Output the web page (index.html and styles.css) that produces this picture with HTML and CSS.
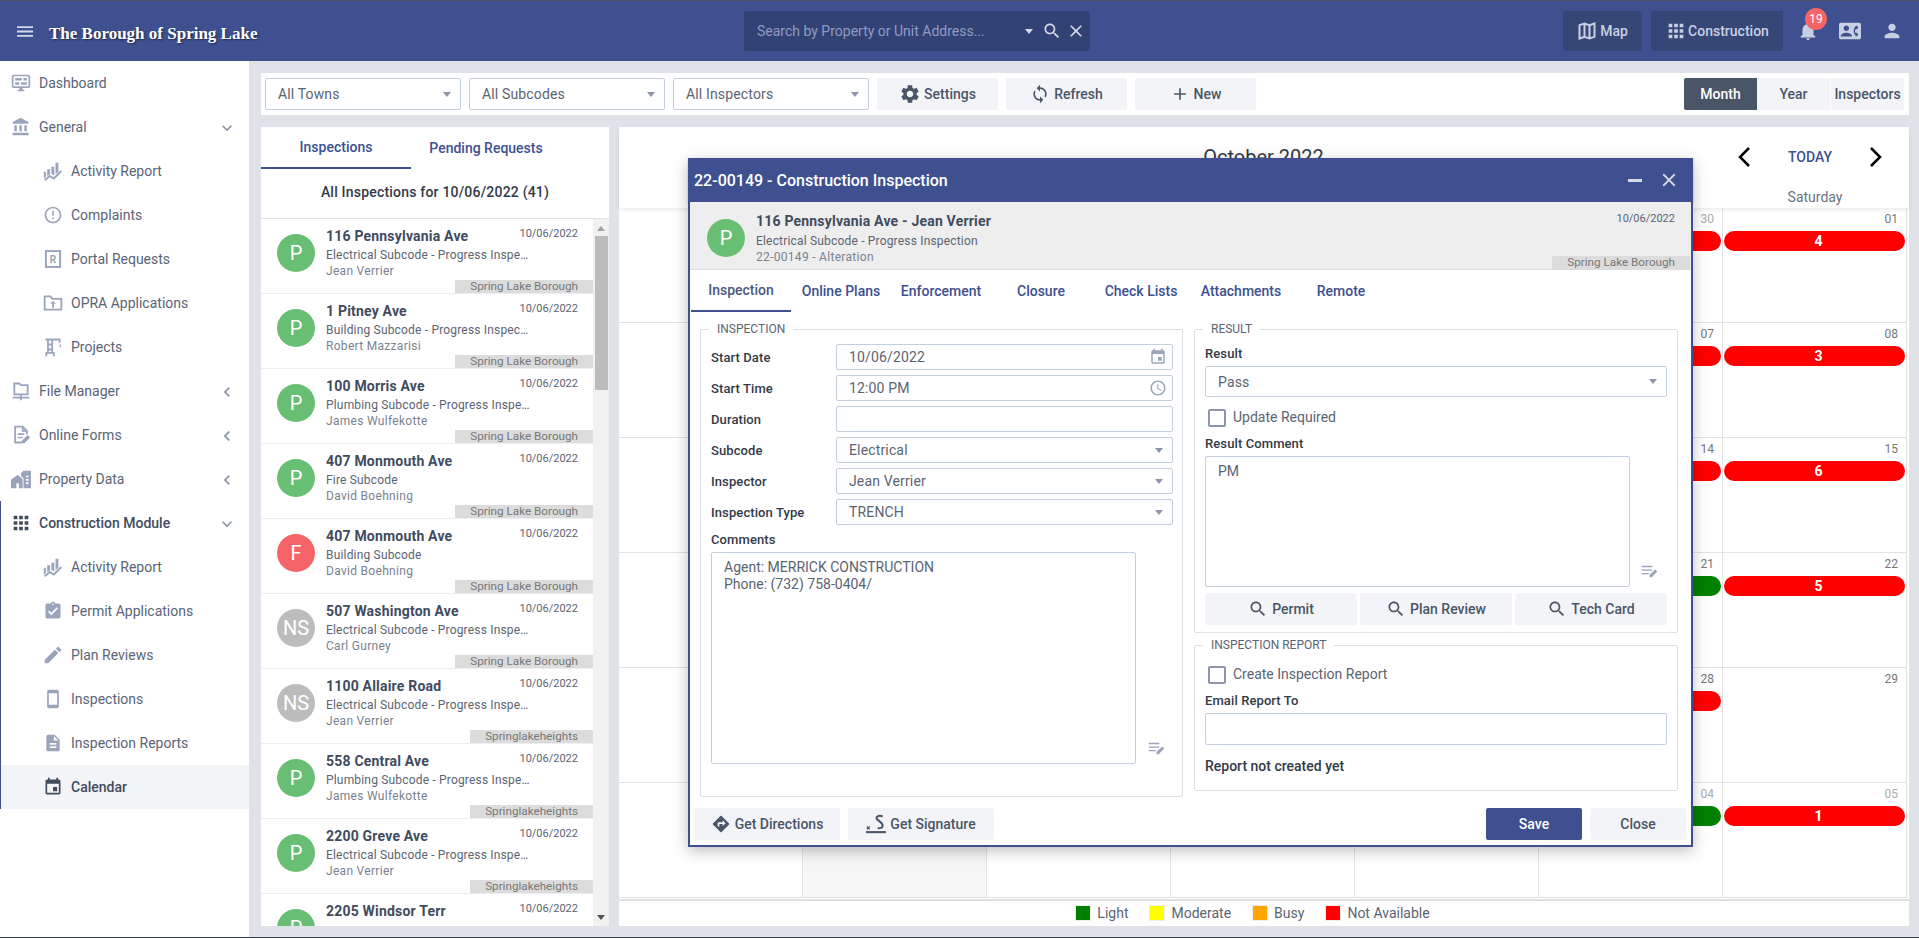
FILE: index.html
```html
<!DOCTYPE html>
<html lang="en">
<head>
<meta charset="utf-8">
<title>The Borough of Spring Lake</title>
<link rel="stylesheet" href="styles.css">
</head>
<body>
<svg class="sprite" xmlns="http://www.w3.org/2000/svg">
  <symbol id="i-menu" viewBox="3 6 18 12"><path d="M3 18h18v-2H3v2zm0-5h18v-2H3v2zm0-7v2h18V6H3z"/></symbol>
  <symbol id="i-search" viewBox="0 0 24 24"><path d="M15.5 14h-.79l-.28-.27C15.41 12.59 16 11.11 16 9.5 16 5.91 13.09 3 9.5 3S3 5.91 3 9.5 5.91 16 9.5 16c1.61 0 3.09-.59 4.23-1.57l.27.28v.79l5 4.99L20.49 19l-4.99-5zm-6 0C7.01 14 5 11.99 5 9.5S7.01 5 9.5 5 14 7.01 14 9.5 11.99 14 9.5 14z"/></symbol>
  <symbol id="i-close" viewBox="0 0 24 24"><path d="M19 6.41L17.59 5 12 10.59 6.41 5 5 6.41 10.59 12 5 17.59 6.41 19 12 13.41 17.59 19 19 17.59 13.41 12z"/></symbol>
  <symbol id="i-map" viewBox="0 0 24 24"><path fill="none" stroke="currentColor" stroke-width="2.4" d="M3 5l6-2 6 2 6-2v16l-6 2-6-2-6 2zM9 3v16M15 5v16"/></symbol>
  <symbol id="i-apps" viewBox="0 0 24 24"><path d="M4 8h4V4H4v4zm6 12h4v-4h-4v4zm-6 0h4v-4H4v4zm0-6h4v-4H4v4zm6 0h4v-4h-4v4zm6-10v4h4V4h-4zm-6 4h4V4h-4v4zm6 6h4v-4h-4v4zm0 6h4v-4h-4v4z"/></symbol>
  <symbol id="i-bell" viewBox="0 0 24 24"><path d="M12 22c1.1 0 2-.9 2-2h-4c0 1.1.89 2 2 2zm6-6v-5c0-3.07-1.64-5.64-4.5-6.32V4c0-.83-.67-1.5-1.5-1.5s-1.5.67-1.5 1.5v.68C7.63 5.36 6 7.92 6 11v5l-2 2v1h16v-1l-2-2z"/></symbol>
  <symbol id="i-person" viewBox="0 0 24 24"><path d="M12 12c2.21 0 4-1.79 4-4s-1.79-4-4-4-4 1.79-4 4 1.79 4 4 4zm0 2c-2.67 0-8 1.34-8 4v2h16v-2c0-2.66-5.33-4-8-4z"/></symbol>
  <symbol id="i-contact" viewBox="0 0 24 24"><path d="M22 3H2C.9 3 0 3.9 0 5v14c0 1.1.9 2 2 2h20c1.1 0 1.99-.9 1.99-2L24 5c0-1.1-.9-2-2-2zM8 6c1.66 0 3 1.34 3 3s-1.34 3-3 3-3-1.34-3-3 1.34-3 3-3zm6 12H2v-1c0-2 4-3.1 6-3.1s6 1.1 6 3.1v1zm3.85-4h1.64L21 16l-1.99 1.99c-1.31-.98-2.28-2.38-2.73-3.99-.18-.64-.28-1.31-.28-2s.1-1.36.28-2c.45-1.62 1.42-3.01 2.73-3.99L21 8l-1.51 2h-1.64c-.22.63-.35 1.3-.35 2s.13 1.37.35 2z"/></symbol>
  <symbol id="i-gear" viewBox="0 0 24 24"><path d="M19.14 12.94c.04-.3.06-.61.06-.94 0-.32-.02-.64-.07-.94l2.03-1.58c.18-.14.23-.41.12-.61l-1.92-3.32c-.12-.22-.37-.29-.59-.22l-2.39.96c-.5-.38-1.03-.7-1.62-.94l-.36-2.54c-.04-.24-.24-.41-.48-.41h-3.84c-.24 0-.43.17-.47.41l-.36 2.54c-.59.24-1.13.57-1.62.94l-2.39-.96c-.22-.08-.47 0-.59.22L2.74 8.87c-.12.21-.08.47.12.61l2.03 1.58c-.05.3-.09.63-.09.94s.02.64.07.94l-2.03 1.58c-.18.14-.23.41-.12.61l1.92 3.32c.12.22.37.29.59.22l2.39-.96c.5.38 1.03.7 1.62.94l.36 2.54c.05.24.24.41.48.41h3.84c.24 0 .44-.17.47-.41l.36-2.54c.59-.24 1.13-.56 1.62-.94l2.39.96c.22.08.47 0 .59-.22l1.92-3.32c.12-.22.07-.47-.12-.61l-2.01-1.58zM12 15.6c-1.98 0-3.6-1.62-3.6-3.6s1.62-3.6 3.6-3.6 3.6 1.62 3.6 3.6-1.62 3.6-3.6 3.6z"/></symbol>
  <symbol id="i-sync" viewBox="0 0 24 24"><path d="M12 4V1L8 5l4 4V6c3.31 0 6 2.69 6 6 0 1.01-.25 1.97-.7 2.8l1.46 1.46C19.54 15.03 20 13.57 20 12c0-4.42-3.58-8-8-8zm0 14c-3.31 0-6-2.69-6-6 0-1.01.25-1.97.7-2.8L5.24 7.74C4.46 8.97 4 10.43 4 12c0 4.42 3.58 8 8 8v3l4-4-4-4v3z"/></symbol>
  <symbol id="i-add" viewBox="0 0 24 24"><path d="M19 13h-6v6h-2v-6H5v-2h6V5h2v6h6v2z"/></symbol>
  <symbol id="i-event" viewBox="0 0 24 24"><path d="M17 12h-5v5h5v-5zM16 1v2H8V1H6v2H5c-1.11 0-1.99.9-1.99 2L3 19c0 1.1.89 2 2 2h14c1.1 0 2-.9 2-2V5c0-1.1-.9-2-2-2h-1V1h-2zm3 18H5V8h14v11z"/></symbol>
  <symbol id="i-clock" viewBox="0 0 24 24"><path d="M11.99 2C6.47 2 2 6.48 2 12s4.47 10 9.99 10C17.52 22 22 17.52 22 12S17.52 2 11.99 2zM12 20c-4.42 0-8-3.58-8-8s3.58-8 8-8 8 3.58 8 8-3.58 8-8 8zm.5-13H11v6l5.25 3.15.75-1.23-4.5-2.67z"/></symbol>
  <symbol id="i-directions" viewBox="0 0 24 24"><path d="M21.71 11.29l-9-9c-.39-.39-1.02-.39-1.41 0l-9 9c-.39.39-.39 1.02 0 1.41l9 9c.39.39 1.02.39 1.41 0l9-9c.39-.38.39-1.01 0-1.41zM14 14.5V12h-4v3H8v-4c0-.55.45-1 1-1h5V7.5l3.5 3.5-3.5 3.5z"/></symbol>
  <symbol id="i-pencil" viewBox="0 0 24 24"><path d="M3 17.25V21h3.75L17.81 9.94l-3.75-3.75L3 17.25zM20.71 7.04c.39-.39.39-1.02 0-1.41l-2.34-2.34c-.39-.39-1.02-.39-1.41 0l-1.83 1.83 3.75 3.75 1.83-1.83z"/></symbol>
  <symbol id="i-phone" viewBox="0 0 24 24"><path d="M17 1.01L7 1c-1.1 0-2 .9-2 2v18c0 1.1.9 2 2 2h10c1.1 0 2-.9 2-2V3c0-1.1-.9-1.99-2-1.99zM17 19H7V5h10v14z"/></symbol>
  <symbol id="i-doc" viewBox="0 0 24 24"><path d="M14 2H6c-1.1 0-1.99.9-1.99 2L4 20c0 1.1.89 2 1.99 2H18c1.1 0 2-.9 2-2V8l-6-6zm2 16H8v-2h8v2zm0-4H8v-2h8v2zm-3-5V3.5L18.5 9H13z"/></symbol>
  <symbol id="i-assign" viewBox="0 0 24 24"><path d="M19 3h-4.18C14.4 1.84 13.3 1 12 1c-1.3 0-2.4.84-2.82 2H5c-1.1 0-2 .9-2 2v14c0 1.1.9 2 2 2h14c1.1 0 2-.9 2-2V5c0-1.1-.9-2-2-2zm-7 0c.55 0 1 .45 1 1s-.45 1-1 1-1-.45-1-1 .45-1 1-1zm-2 14l-4-4 1.41-1.41L10 14.17l6.59-6.59L18 9l-8 8z"/></symbol>
  <symbol id="i-alert" viewBox="0 0 24 24"><path d="M11 15h2v2h-2zm0-8h2v6h-2zm.99-5C6.47 2 2 6.48 2 12s4.47 10 9.99 10C17.52 22 22 17.52 22 12S17.52 2 11.99 2zM12 20c-4.42 0-8-3.58-8-8s3.58-8 8-8 8 3.58 8 8-3.58 8-8 8z"/></symbol>
  <symbol id="i-bank" viewBox="0 0 24 24"><path d="M4 10v7h3v-7H4zm6 0v7h3v-7h-3zM2 22h19v-3H2v3zm14-12v7h3v-7h-3zm-4.5-9L2 6v2h19V6l-9.5-5z"/></symbol>
  <symbol id="i-dash" viewBox="0 0 24 24"><path d="M21 2H3c-1.1 0-2 .9-2 2v12c0 1.1.9 2 2 2h7v2H8v2h8v-2h-2v-2h7c1.1 0 2-.9 2-2V4c0-1.1-.9-2-2-2zm0 14H3V4h18v12z"/><path d="M5 6h8v3H5zM15 6h4v3h-4zM5 11h5v3H5zM12 11h7v3h-7z"/></symbol>
  <symbol id="i-activity" viewBox="0 0 24 24"><path d="M5 10h3.500v6L5 18zM10 7h3.500v10.500L10 15.500zM15 2h3.500v11L15 16z"/><path fill="none" stroke="currentColor" stroke-width="2.400" d="M2 23l6-5 5 3 9-9"/><path d="M1 13h2.500v6L1 21z"/></symbol>
  <symbol id="i-portal" viewBox="0 0 24 24"><rect x="3.500" y="2.500" width="17" height="19" fill="none" stroke="currentColor" stroke-width="2.400"/><text x="12" y="16.500" font-family="Roboto, sans-serif" font-size="12" font-weight="700" text-anchor="middle">R</text></symbol>
  <symbol id="i-folder" viewBox="0 0 24 24"><path fill="none" stroke="currentColor" stroke-width="2.200" d="M2 4h7l2 3h11v13H2z"/><path d="M12 9.500l3.500 3.500H13v5h-2v-5H8.500z"/></symbol>
  <symbol id="i-crane" viewBox="0 0 24 24"><path fill="none" stroke="currentColor" stroke-width="2.200" d="M3 3h18M6 3v16M11 3v16M5 9h7M5 15h7M3 19h11M4 19v4M13 19v4M20 3v4"/><path fill="none" stroke="currentColor" stroke-width="1.500" d="M20 9c2 1 1 3 0 3"/></symbol>
  <symbol id="i-netfolder" viewBox="0 0 24 24"><path fill="none" stroke="currentColor" stroke-width="2.200" d="M4 3h6l2 2h8v11H4z"/><path d="M11 16h2v3h9v2h-9v2h-2v-2H2v-2h9z"/></symbol>
  <symbol id="i-form" viewBox="0 0 24 24"><path fill="none" stroke="currentColor" stroke-width="2.200" d="M13 21H5V2h9l5 5v4M14 2v5h5"/><path d="M8 10h8v2H8zM8 14h6v2H8z"/><path d="M13 22v-3l7-7 3 3-7 7z"/></symbol>
  <symbol id="i-property" viewBox="0 0 24 24"><path d="M0 23V13l8-6 6 5V23H9.500v-6h-3v6z"/><path fill-rule="evenodd" d="M15 2h9v21h-9V11l-3-2.500V5zM18 8v2h3V8zM18 12v2h3v-2zM18 16v2h3v-2z"/></symbol>
  <symbol id="i-notes" viewBox="0 0 24 18"><path d="M1 1h15v2H1zM1 6h15v2H1zM1 11h10v2H1z"/><path d="M12 17v-3l8-8 3 3-8 8z"/></symbol>
  <symbol id="i-sign" viewBox="0 0 24 24"><path fill="none" stroke="currentColor" stroke-width="2.400" d="M20 3c-5-2-8 0-7 3 1 2 7 4 7 8 0 2-2 3-6 3"/><path fill="none" stroke="currentColor" stroke-width="1.500" d="M1 15l3.500 3.500M4.500 15L1 18.500"/><path d="M0 20.500h24V23H0z"/></symbol>
  <symbol id="i-down" viewBox="0 0 24 24"><path d="M16.590 8.590L12 13.170 7.410 8.590 6 10l6 6 6-6z"/></symbol>
  <symbol id="i-left" viewBox="0 0 24 24"><path d="M15.410 7.410L14 6l-6 6 6 6 1.410-1.410L10.830 12z"/></symbol>
  <symbol id="i-prev" viewBox="0 0 12 20"><path fill="none" stroke="currentColor" stroke-width="2.500" d="M11 1L2 10l9 9"/></symbol>
  <symbol id="i-next" viewBox="0 0 12 20"><path fill="none" stroke="currentColor" stroke-width="2.500" d="M1 1l9 9-9 9"/></symbol>
</svg>

<div class="app">
  <header class="topbar">
    <div class="brand">
      <svg class="ic-menu"><use href="#i-menu"/></svg>
      <span class="brand-name">The Borough of Spring Lake</span>
    </div>
    <div class="searchbox">
      <span class="search-text">Search by Property or Unit Address...</span>
      <span class="caret caret-light"></span>
      <svg class="ic-search"><use href="#i-search"/></svg>
      <svg class="ic-search"><use href="#i-close"/></svg>
    </div>
    <div class="top-actions">
      <a class="top-btn top-btn-map"><svg class="ic-20"><use href="#i-map"/></svg>Map</a>
      <a class="top-btn top-btn-con"><svg class="ic-22"><use href="#i-apps"/></svg>Construction</a>
      <span class="top-icon"><svg class="ic-22"><use href="#i-bell"/></svg><b class="badge">19</b></span>
      <span class="top-icon"><svg class="ic-22"><use href="#i-contact"/></svg></span>
      <span class="top-icon"><svg class="ic-22"><use href="#i-person"/></svg></span>
    </div>
  </header>

  <div class="main">
    <nav class="sidebar">
      <a class="nav-row"><svg class="nav-ic"><use href="#i-dash"/></svg>Dashboard</a>
      <a class="nav-row"><svg class="nav-ic"><use href="#i-bank"/></svg>General<svg class="nav-arrow"><use href="#i-down"/></svg></a>
      <a class="nav-row nav-sub"><svg class="nav-ic"><use href="#i-activity"/></svg>Activity Report</a>
      <a class="nav-row nav-sub"><svg class="nav-ic"><use href="#i-alert"/></svg>Complaints</a>
      <a class="nav-row nav-sub"><svg class="nav-ic"><use href="#i-portal"/></svg>Portal Requests</a>
      <a class="nav-row nav-sub"><svg class="nav-ic"><use href="#i-folder"/></svg>OPRA Applications</a>
      <a class="nav-row nav-sub"><svg class="nav-ic"><use href="#i-crane"/></svg>Projects</a>
      <a class="nav-row"><svg class="nav-ic"><use href="#i-netfolder"/></svg>File Manager<svg class="nav-arrow"><use href="#i-left"/></svg></a>
      <a class="nav-row"><svg class="nav-ic"><use href="#i-form"/></svg>Online Forms<svg class="nav-arrow"><use href="#i-left"/></svg></a>
      <a class="nav-row"><svg class="nav-ic"><use href="#i-property"/></svg>Property Data<svg class="nav-arrow"><use href="#i-left"/></svg></a>
      <div class="nav-group">
        <a class="nav-row nav-open"><svg class="nav-ic nav-ic-lg"><use href="#i-apps"/></svg>Construction Module<svg class="nav-arrow"><use href="#i-down"/></svg></a>
        <a class="nav-row nav-sub"><svg class="nav-ic"><use href="#i-activity"/></svg>Activity Report</a>
        <a class="nav-row nav-sub"><svg class="nav-ic"><use href="#i-assign"/></svg>Permit Applications</a>
        <a class="nav-row nav-sub"><svg class="nav-ic nav-ic-lg"><use href="#i-pencil"/></svg>Plan Reviews</a>
        <a class="nav-row nav-sub"><svg class="nav-ic"><use href="#i-phone"/></svg>Inspections</a>
        <a class="nav-row nav-sub"><svg class="nav-ic"><use href="#i-doc"/></svg>Inspection Reports</a>
        <a class="nav-row nav-sub nav-active"><svg class="nav-ic"><use href="#i-event"/></svg>Calendar</a>
      </div>
    </nav>

    <main class="content">
      <section class="toolbar">
        <div class="field tool-select"><span>All Towns</span><span class="caret"></span></div>
        <div class="field tool-select"><span>All Subcodes</span><span class="caret"></span></div>
        <div class="field tool-select"><span>All Inspectors</span><span class="caret"></span></div>
        <a class="btn tool-btn btn-gear"><svg class="ic-22"><use href="#i-gear"/></svg>Settings</a>
        <a class="btn tool-btn"><svg class="ic-20"><use href="#i-sync"/></svg>Refresh</a>
        <a class="btn tool-btn"><svg class="ic-20"><use href="#i-add"/></svg>New</a>
        <div class="views">
          <a class="view view-on">Month</a>
          <a class="view">Year</a>
          <a class="view">Inspectors</a>
        </div>
      </section>

      <section class="work">
        <aside class="panel-left">
          <div class="tabs">
            <a class="tab tab-on">Inspections</a>
            <a class="tab">Pending Requests</a>
          </div>
          <h2 class="list-title">All Inspections for 10/06/2022 (41)</h2>
          <div class="list-wrap">
            <div class="items">
              <article class="item">
                <div class="item-main"><span class="avatar av-green">P</span>
                  <div class="item-text"><div class="item-head"><strong>116 Pennsylvania Ave</strong><time>10/06/2022</time></div>
                  <p class="item-sub">Electrical Subcode - Progress Inspection</p><p class="item-who">Jean Verrier</p></div></div>
                <span class="tag">Spring Lake Borough</span>
              </article>
              <article class="item">
                <div class="item-main"><span class="avatar av-green">P</span>
                  <div class="item-text"><div class="item-head"><strong>1 Pitney Ave</strong><time>10/06/2022</time></div>
                  <p class="item-sub">Building Subcode - Progress Inspection</p><p class="item-who">Robert Mazzarisi</p></div></div>
                <span class="tag">Spring Lake Borough</span>
              </article>
              <article class="item">
                <div class="item-main"><span class="avatar av-green">P</span>
                  <div class="item-text"><div class="item-head"><strong>100 Morris Ave</strong><time>10/06/2022</time></div>
                  <p class="item-sub">Plumbing Subcode - Progress Inspection</p><p class="item-who">James Wulfekotte</p></div></div>
                <span class="tag">Spring Lake Borough</span>
              </article>
              <article class="item">
                <div class="item-main"><span class="avatar av-green">P</span>
                  <div class="item-text"><div class="item-head"><strong>407 Monmouth Ave</strong><time>10/06/2022</time></div>
                  <p class="item-sub">Fire Subcode</p><p class="item-who">David Boehning</p></div></div>
                <span class="tag">Spring Lake Borough</span>
              </article>
              <article class="item">
                <div class="item-main"><span class="avatar av-red">F</span>
                  <div class="item-text"><div class="item-head"><strong>407 Monmouth Ave</strong><time>10/06/2022</time></div>
                  <p class="item-sub">Building Subcode</p><p class="item-who">David Boehning</p></div></div>
                <span class="tag">Spring Lake Borough</span>
              </article>
              <article class="item">
                <div class="item-main"><span class="avatar av-gray">NS</span>
                  <div class="item-text"><div class="item-head"><strong>507 Washington Ave</strong><time>10/06/2022</time></div>
                  <p class="item-sub">Electrical Subcode - Progress Inspection</p><p class="item-who">Carl Gurney</p></div></div>
                <span class="tag">Spring Lake Borough</span>
              </article>
              <article class="item">
                <div class="item-main"><span class="avatar av-gray">NS</span>
                  <div class="item-text"><div class="item-head"><strong>1100 Allaire Road</strong><time>10/06/2022</time></div>
                  <p class="item-sub">Electrical Subcode - Progress Inspection</p><p class="item-who">Jean Verrier</p></div></div>
                <span class="tag">Springlakeheights</span>
              </article>
              <article class="item">
                <div class="item-main"><span class="avatar av-green">P</span>
                  <div class="item-text"><div class="item-head"><strong>558 Central Ave</strong><time>10/06/2022</time></div>
                  <p class="item-sub">Plumbing Subcode - Progress Inspection</p><p class="item-who">James Wulfekotte</p></div></div>
                <span class="tag">Springlakeheights</span>
              </article>
              <article class="item">
                <div class="item-main"><span class="avatar av-green">P</span>
                  <div class="item-text"><div class="item-head"><strong>2200 Greve Ave</strong><time>10/06/2022</time></div>
                  <p class="item-sub">Electrical Subcode - Progress Inspection</p><p class="item-who">Jean Verrier</p></div></div>
                <span class="tag">Springlakeheights</span>
              </article>
              <article class="item">
                <div class="item-main"><span class="avatar av-green">P</span>
                  <div class="item-text"><div class="item-head"><strong>2205 Windsor Terr</strong><time>10/06/2022</time></div></div></div>
              </article>
            </div>
            <div class="scroll">
              <span class="scroll-up"></span>
              <span class="scroll-thumb"></span>
              <span class="scroll-down"></span>
            </div>
          </div>
        </aside>

        <section class="calendar">
          <div class="cal-head">
            <div class="cal-title-row">
              <span></span>
              <h1 class="cal-title">October 2022</h1>
              <div class="cal-nav">
                <svg class="ic-chev"><use href="#i-prev"/></svg>
                <a class="today">TODAY</a>
                <svg class="ic-chev"><use href="#i-next"/></svg>
              </div>
            </div>
            <div class="cal-days">
              <span>Sunday</span><span>Monday</span><span>Tuesday</span><span>Wednesday</span><span>Thursday</span><span>Friday</span><span>Saturday</span>
            </div>
          </div>
          <div class="cal-grid">
            <div class="cell"><span class="d d-out">25</span></div><div class="cell"><span class="d d-out">26</span></div><div class="cell"><span class="d d-out">27</span></div><div class="cell"><span class="d d-out">28</span></div><div class="cell"><span class="d d-out">29</span></div><div class="cell"><span class="d d-out">30</span><span class="pill pill-red">2</span></div><div class="cell"><span class="d">01</span><span class="pill pill-red">4</span></div>
            <div class="cell"><span class="d">02</span></div><div class="cell"><span class="d">03</span></div><div class="cell"><span class="d">04</span></div><div class="cell"><span class="d">05</span></div><div class="cell"><span class="d">06</span></div><div class="cell"><span class="d">07</span><span class="pill pill-red">2</span></div><div class="cell"><span class="d">08</span><span class="pill pill-red">3</span></div>
            <div class="cell"><span class="d">09</span></div><div class="cell"><span class="d">10</span></div><div class="cell"><span class="d">11</span></div><div class="cell"><span class="d">12</span></div><div class="cell"><span class="d">13</span></div><div class="cell"><span class="d">14</span><span class="pill pill-red">2</span></div><div class="cell"><span class="d">15</span><span class="pill pill-red">6</span></div>
            <div class="cell"><span class="d">16</span></div><div class="cell"><span class="d">17</span></div><div class="cell"><span class="d">18</span></div><div class="cell"><span class="d">19</span></div><div class="cell"><span class="d">20</span></div><div class="cell"><span class="d">21</span><span class="pill pill-green">1</span></div><div class="cell"><span class="d">22</span><span class="pill pill-red">5</span></div>
            <div class="cell"><span class="d">23</span></div><div class="cell"><span class="d">24</span></div><div class="cell"><span class="d">25</span></div><div class="cell"><span class="d">26</span></div><div class="cell"><span class="d">27</span></div><div class="cell"><span class="d">28</span><span class="pill pill-red">2</span></div><div class="cell"><span class="d">29</span></div>
            <div class="cell"><span class="d">30</span></div><div class="cell cell-shade"><span class="d">31</span></div><div class="cell"><span class="d d-out">01</span></div><div class="cell"><span class="d d-out">02</span></div><div class="cell"><span class="d d-out">03</span></div><div class="cell"><span class="d d-out">04</span><span class="pill pill-green">1</span></div><div class="cell"><span class="d d-out">05</span><span class="pill pill-red">1</span></div>
          </div>
          <div class="legend">
            <span class="leg"><i class="sw sw-green"></i>Light</span>
            <span class="leg"><i class="sw sw-yellow"></i>Moderate</span>
            <span class="leg"><i class="sw sw-orange"></i>Busy</span>
            <span class="leg"><i class="sw sw-red"></i>Not Available</span>
          </div>
        </section>
      </section>
    </main>
  </div>
</div>

<div class="dialog">
  <div class="dlg-bar">
    <span class="dlg-title">22-00149 - Construction Inspection</span>
    <span class="dlg-min"></span>
    <svg class="ic-22"><use href="#i-close"/></svg>
  </div>
  <div class="dlg-sum">
    <span class="avatar av-green">P</span>
    <div class="sum-text">
      <strong>116 Pennsylvania Ave - Jean Verrier</strong>
      <p class="item-sub">Electrical Subcode - Progress Inspection</p>
      <p class="item-who">22-00149 - Alteration</p>
    </div>
    <time class="sum-date">10/06/2022</time>
    <span class="tag sum-tag">Spring Lake Borough</span>
  </div>
  <div class="dlg-tabs">
    <a class="dlg-tab dlg-tab-on">Inspection</a>
    <a class="dlg-tab">Online Plans</a>
    <a class="dlg-tab">Enforcement</a>
    <a class="dlg-tab">Closure</a>
    <a class="dlg-tab">Check Lists</a>
    <a class="dlg-tab">Attachments</a>
    <a class="dlg-tab">Remote</a>
  </div>
  <div class="dlg-body">
    <fieldset class="fs fs-insp">
      <legend>INSPECTION</legend>
      <div class="form-grid">
        <label>Start Date</label><div class="field"><span>10/06/2022</span><svg class="ic-field"><use href="#i-event"/></svg></div>
        <label>Start Time</label><div class="field"><span>12:00 PM</span><svg class="ic-field"><use href="#i-clock"/></svg></div>
        <label>Duration</label><div class="field"></div>
        <label>Subcode</label><div class="field"><span>Electrical</span><span class="caret"></span></div>
        <label>Inspector</label><div class="field"><span>Jean Verrier</span><span class="caret"></span></div>
        <label>Inspection Type</label><div class="field"><span>TRENCH</span><span class="caret"></span></div>
      </div>
      <label class="lbl lbl-comments">Comments</label>
      <div class="note-row">
        <div class="note note-tall">Agent: MERRICK CONSTRUCTION<br>Phone: (732) 758-0404/</div>
        <svg class="ic-notes"><use href="#i-notes"/></svg>
      </div>
    </fieldset>
    <div class="dlg-right">
      <fieldset class="fs fs-result">
        <legend>RESULT</legend>
        <label class="lbl lbl-result">Result</label>
        <div class="field field-31"><span>Pass</span><span class="caret"></span></div>
        <div class="check"><span class="box"></span><span class="check-label">Update Required</span></div>
        <label class="lbl lbl-rc">Result Comment</label>
        <div class="note-row">
          <div class="note note-short">PM</div>
          <svg class="ic-notes ic-notes-r"><use href="#i-notes"/></svg>
        </div>
        <div class="lookups">
          <a class="btn"><svg class="ic-20"><use href="#i-search"/></svg>Permit</a>
          <a class="btn"><svg class="ic-20"><use href="#i-search"/></svg>Plan Review</a>
          <a class="btn"><svg class="ic-20"><use href="#i-search"/></svg>Tech Card</a>
        </div>
      </fieldset>
      <fieldset class="fs fs-report">
        <legend>INSPECTION REPORT</legend>
        <div class="check check-report"><span class="box"></span><span class="check-label">Create Inspection Report</span></div>
        <label class="lbl lbl-rc">Email Report To</label>
        <div class="field field-32"></div>
        <p class="report-note">Report not created yet</p>
      </fieldset>
    </div>
  </div>
  <div class="dlg-foot">
    <div class="foot-group">
      <a class="btn foot-btn"><svg class="ic-20"><use href="#i-directions"/></svg>Get Directions</a>
      <a class="btn foot-btn"><svg class="ic-sign"><use href="#i-sign"/></svg>Get Signature</a>
    </div>
    <div class="foot-group">
      <a class="btn foot-save">Save</a>
      <a class="btn foot-close">Close</a>
    </div>
  </div>
</div>
</body>
</html>
```

FILE: styles.css
```css
* { box-sizing: border-box; }
html, body { margin: 0; padding: 0; height: 100%; }
body {
  font-family: Roboto, "Liberation Sans", sans-serif;
  font-size: 14px;
  color: #4a5568;
  background: #dfe2e7;
  overflow: hidden;
  position: relative;
}
p, h1, h2 { margin: 0; font-weight: 400; }
a { color: inherit; text-decoration: none; }
svg { fill: currentColor; flex: none; }
.sprite { display: none; }

.app {
  height: 938px;
  display: grid;
  grid-template-rows: 61px 1fr;
  border-bottom: 1px solid #3a3f4a;
}

/* top bar */
.topbar {
  display: grid;
  grid-template-columns: 744px 346px 1fr;
  align-items: center;
  background: #3e5090;
  border-top: 1px solid #4a505f;
  padding-right: 6px;
}
.brand { display: flex; align-items: center; padding-left: 17px; }
.ic-menu { width: 16px; height: 11px; color: #d5d9e8; }
.brand-name {
  margin: 5px 0 0 16px;
  font: 700 17px "Liberation Serif", serif;
  color: #fff;
  text-shadow: 1px 1px 2px #1d2747;
}
.searchbox {
  height: 40px;
  background: #334274;
  border-radius: 3px;
  display: flex;
  align-items: center;
  padding: 0 4px 0 13px;
  gap: 4px;
  color: #d5d9e8;
}
.search-text { flex: 1; color: #8f9bc2; font-size: 14px; }
.ic-search { width: 20px; height: 20px; }
.caret-light { border-top-color: #d5d9e8 !important; margin: 0 5px 0 0 !important; }
.top-actions { display: flex; justify-content: flex-end; align-items: center; color: #c9cfe3; }
.top-btn {
  height: 40px;
  background: #364677;
  border-radius: 3px;
  display: flex;
  align-items: center;
  justify-content: center;
  font-weight: 500;
}
.top-btn-map { width: 79px; margin-right: 9px; gap: 3px; }
.top-btn-con { width: 132px; margin-right: 4px; gap: 1px; }
.ic-20 { width: 20px; height: 20px; }
.ic-22 { width: 22px; height: 22px; }
.top-icon { width: 42px; height: 40px; display: flex; align-items: center; justify-content: center; position: relative; }
.badge {
  position: absolute;
  left: 18px;
  top: -3px;
  width: 22px;
  height: 22px;
  border-radius: 50%;
  background: #f56565;
  color: #fff;
  font-size: 12px;
  font-weight: 400;
  line-height: 22px;
  text-align: center;
}

.main { display: grid; grid-template-columns: 249px 1fr; min-height: 0; }

/* sidebar */
.sidebar { background: #fff; }
.nav-row {
  height: 44px;
  display: flex;
  align-items: center;
  padding-left: 11px;
  color: #5a6477;
  position: relative;
}
.nav-ic { width: 20px; height: 20px; margin-right: 8px; color: #9aa5bc; }
.nav-ic-lg { width: 22px; height: 22px; margin: 0 7px 0 -1px; }
.nav-sub { padding-left: 43px; }
.nav-arrow { width: 20px; height: 20px; position: absolute; right: 12px; top: 13px; color: #8a93a5; }
.nav-group { border-left: 1px solid #3e5090; }
.nav-group .nav-row { padding-left: 10px; }
.nav-group .nav-sub { padding-left: 42px; }
.nav-open { font-weight: 500; color: #414b5e; }
.nav-open .nav-ic { color: #414b5e; }
.nav-active { background: #f3f4f8; font-weight: 500; color: #414b5e; }
.nav-active .nav-ic { color: #414b5e; }

/* content */
.content { padding: 12px 10px 11px 12px; display: flex; flex-direction: column; gap: 12px; min-height: 0; }
.toolbar {
  height: 42px;
  flex: none;
  background: #fff;
  display: flex;
  align-items: center;
  padding: 0 4px;
  gap: 8px;
}
.field {
  height: 26px;
  border: 1px solid #c4cfdd;
  border-radius: 2px;
  background: #fff;
  display: flex;
  align-items: center;
  justify-content: space-between;
  padding: 0 8px 0 12px;
  color: #5b6472;
  letter-spacing: .15px;
}
.tool-select { width: 196px; height: 32px; }
.caret {
  width: 0;
  height: 0;
  border: 4.5px solid transparent;
  border-bottom-width: 0;
  border-top: 5px solid #8d96a8;
  margin-right: 1px;
}
.btn {
  height: 32px;
  background: #f3f4f8;
  border-radius: 2px;
  display: flex;
  align-items: center;
  justify-content: center;
  gap: 4px;
  color: #4a5568;
  font-weight: 500;
}
.btn-gear { gap: 3px; }
.tool-btn { width: 121px; }
.views { margin-left: auto; margin-right: 1px; display: flex; gap: 1px; }
.view {
  width: 73px;
  height: 32px;
  background: #f3f4f8;
  display: flex;
  align-items: center;
  justify-content: center;
  font-weight: 500;
  color: #4a5568;
}
.view-on { background: #4a5568; color: #fff; border-radius: 2px 0 0 2px; margin-right: -1px; }

.work { flex: 1; display: grid; grid-template-columns: 348px 1fr; gap: 10px; min-height: 0; }

/* inspection list */
.panel-left { background: #fff; display: flex; flex-direction: column; min-height: 0; }
.tabs { display: flex; height: 42px; flex: none; }
.tab {
  width: 150px;
  display: flex;
  align-items: center;
  justify-content: center;
  color: #3e5090;
  font-weight: 500;
}
.tab-on { border-bottom: 2px solid #3e5090; }
.list-title {
  height: 49px;
  flex: none;
  line-height: 47px;
  text-align: center;
  font-size: 14px;
  font-weight: 500;
  letter-spacing: .2px;
  color: #333a47;
}
.list-wrap { flex: 1; display: flex; min-height: 0; border-top: 1px solid #e2e4e8; }
.items { flex: 1; overflow: hidden; }
.item {
  height: 75px;
  display: flex;
  flex-direction: column;
  border-bottom: 1px solid #eceef1;
  background: #fff;
}
.item-main { height: 61px; display: flex; padding-left: 16px; }
.avatar {
  width: 38px;
  height: 38px;
  border-radius: 50%;
  color: #fff;
  font-size: 20px;
  display: flex;
  align-items: center;
  justify-content: center;
  flex: none;
  margin-top: 15px;
}
.av-green { background: #68bf73; }
.av-red { background: #f56468; }
.av-gray { background: #bcbcbc; }
.item-text { flex: 1; min-width: 0; margin-left: 11px; padding: 7px 15px 0 0; }
.item-head { display: flex; justify-content: space-between; }
.item-head strong { font-size: 14px; font-weight: 700; letter-spacing: .2px; color: #414b5e; line-height: 20px; }
time { font-size: 11px; line-height: 16px; color: #5b6472; }
.item-sub {
  font-size: 12px;
  line-height: 16px;
  margin-top: 1px;
  max-width: 204.500px;
  letter-spacing: .18px;
  color: #5b6472;
  white-space: nowrap;
  overflow: hidden;
  text-overflow: ellipsis;
}
.item-who { font-size: 12px; line-height: 16px; letter-spacing: .3px; color: #7a828f; }
.tag {
  align-self: flex-end;
  height: 13px;
  line-height: 13px;
  background: #dcdcdc;
  color: #777;
  font-size: 11.7px;
  padding: 0 15px;
}
.scroll { width: 16px; flex: none; background: #f1f1f1; display: flex; flex-direction: column; align-items: center; }
.scroll-up {
  margin-top: 7px;
  border: 4px solid transparent;
  border-top-width: 0;
  border-bottom: 5px solid #a3a3a3;
}
.scroll-thumb { width: 13px; height: 154px; margin-top: 5px; background: #bcbcbc; }
.scroll-down {
  margin-top: auto;
  margin-bottom: 6px;
  border: 4px solid transparent;
  border-bottom-width: 0;
  border-top: 5px solid #505050;
}

/* calendar */
.calendar { background: #fff; display: flex; flex-direction: column; min-height: 0; }
.cal-head { height: 81px; flex: none; box-shadow: 0 2px 4px rgba(0,0,0,.08); position: relative; }
.cal-title-row { height: 60px; display: grid; grid-template-columns: 1fr auto 1fr; align-items: center; padding: 0 27px 0 26px; }
.cal-title { font-size: 20px; color: #333a47; }
.cal-nav { display: flex; align-items: center; justify-content: flex-end; color: #000; }
.ic-chev { width: 12px; height: 20px; }
.today { width: 120px; text-align: center; color: #3e5090; font-weight: 500; }
.cal-days { display: grid; grid-template-columns: repeat(7, 184px); text-align: center; color: #6b7280; line-height: 20px; }
.cal-grid { flex: 1; display: grid; grid-template-columns: repeat(7, 184px); grid-template-rows: repeat(6, 115px); }
.cell { border-right: 1px solid #e3e3e3; border-bottom: 1px solid #e3e3e3; display: flex; flex-direction: column; padding: 3px 1px 0 1px; }
.cell-shade { background: #f6f6f6; }
.d { text-align: right; padding-right: 7px; line-height: 16px; font-size: 12px; color: #777; }
.d-out { color: #aaa; }
.pill {
  height: 20px;
  margin-top: 4px;
  border-radius: 10px;
  color: #fff;
  font-weight: 700;
  text-align: center;
  line-height: 20px;
  padding-left: 8px;
}
.pill-red { background: #f00; }
.pill-green { background: #008000; }
.legend {
  height: 27px;
  flex: none;
  display: flex;
  justify-content: center;
  align-items: center;
  gap: 21px;
  padding: 0 23px 1px 0;
  border-top: 2px solid #e0e0e0;
  color: #5b6472;
}
.leg { display: flex; align-items: center; }
.sw { width: 16px; height: 16px; margin-right: 6px; border: 1px solid #eee; }
.sw-green { background: #008000; }
.sw-yellow { background: #ff0; }
.sw-orange { background: #ffa500; }
.sw-red { background: #f00; }

/* dialog */
.dialog {
  position: absolute;
  left: 688px;
  top: 158px;
  width: 1005px;
  height: 689px;
  background: #fff;
  border: 2px solid #3e5090;
  border-top: 0;
  display: flex;
  flex-direction: column;
  box-shadow: 0 4px 14px rgba(0,0,0,.25);
}
.dlg-bar {
  height: 44px;
  flex: none;
  background: #3e5090;
  margin: 0 -2px;
  display: flex;
  align-items: center;
  padding: 0 13px 0 6px;
  color: #d5d9e8;
  box-shadow: 0 1px 2px rgba(0,0,0,.2);
}
.dlg-title { flex: 1; color: #fff; font-size: 16px; font-weight: 500; }
.dlg-min { width: 14px; height: 3px; background: #d5d9e8; margin-right: 16px; }
.dlg-sum {
  height: 68px;
  flex: none;
  background: #eee;
  border-bottom: 1px solid #ddd;
  display: flex;
  padding-left: 17px;
  position: relative;
}
.dlg-sum .avatar { margin-top: 17px; }
.sum-text { margin-left: 11px; padding-top: 9px; }
.sum-text strong { display: block; font-size: 14px; font-weight: 700; letter-spacing: .2px; color: #414b5e; line-height: 20px; }
.sum-text .item-sub { max-width: none; margin-top: 2px; }
.sum-date { position: absolute; right: 16px; top: 9px; }
.sum-tag { position: absolute; right: 1px; bottom: 0; }
.dlg-tabs { height: 42px; flex: none; display: flex; padding-left: 1px; }
.dlg-tab { width: 100px; display: flex; align-items: center; justify-content: center; color: #3e5090; font-weight: 500; }
.dlg-tab-on { border-bottom: 2px solid #3e5090; color: #4a5a80; }

.dlg-body {
  height: 496px;
  flex: none;
  padding: 10px 13px 0 10px;
  display: grid;
  grid-template-columns: 483px 484px;
  gap: 11px;
  align-items: start;
}
.fs { margin: 0; padding: 0 9px 0 10px; border: 1px solid #dcdfe4; border-radius: 2px; min-width: 0; }
.fs legend { margin-left: -2px; padding: 0 8px; font-size: 12px; line-height: 14px; color: #5b6472; }
.fs-insp { height: 475px; }
.dlg-right { display: flex; flex-direction: column; gap: 5px; }
.fs-result { height: 311px; padding-right: 10px; }
.fs-report { height: 153px; padding-right: 10px; }

.form-grid {
  margin-top: 8px;
  display: grid;
  grid-template-columns: 125px 1fr;
  grid-auto-rows: 26px;
  row-gap: 5px;
  align-items: center;
}
label { font-size: 13px; font-weight: 500; letter-spacing: .1px; color: #333a47; line-height: 18px; height: 16px; display: block; }
.ic-field { width: 18px; height: 18px; color: #9aa5bc; margin-right: -3px; }
.lbl-comments { margin-top: 6px; }
.note-row { display: flex; align-items: flex-end; margin-top: 5px; }
.note { border: 1px solid #c4cfdd; border-radius: 2px; padding: 6px 12px; line-height: 17px; color: #5b6472; }
.note-tall { width: 425px; height: 212px; }
.note-short { width: 425px; height: 131px; }
.ic-notes { width: 17px; height: 13px; margin: 0 0 9px 12px; color: #9aa5bc; }
.ic-notes-r { margin-left: 11px; }
.lbl-result { margin-top: 9px; }
.field-31 { height: 31px; margin-top: 5px; }
.field-32 { height: 32px; margin-top: 5px; }
.check { display: flex; align-items: center; margin: 12px 0 0 3px; height: 18px; color: #5b6472; }
.check-label { margin-bottom: 2px; }
.check-report { margin-top: 14px; }
.box { width: 18px; height: 18px; border: 2px solid #8b96ab; border-radius: 2px; margin-right: 7px; }
.lbl-rc { margin-top: 8px; }
.lookups { display: grid; grid-template-columns: repeat(3, 152px); gap: 3px; margin-top: 6px; }
.report-note { margin-top: 12px; font-weight: 500; font-size: 14px; color: #333a47; line-height: 18px; }

.dlg-foot { display: flex; justify-content: space-between; padding: 0 5px 0 4px; }
.foot-group { display: flex; gap: 8px; }
.foot-btn { width: 146px; }
.ic-sign { width: 20px; height: 20px; }
.foot-save { width: 96px; background: #3e5090; color: #fff; }
.foot-close { width: 96px; }
```
